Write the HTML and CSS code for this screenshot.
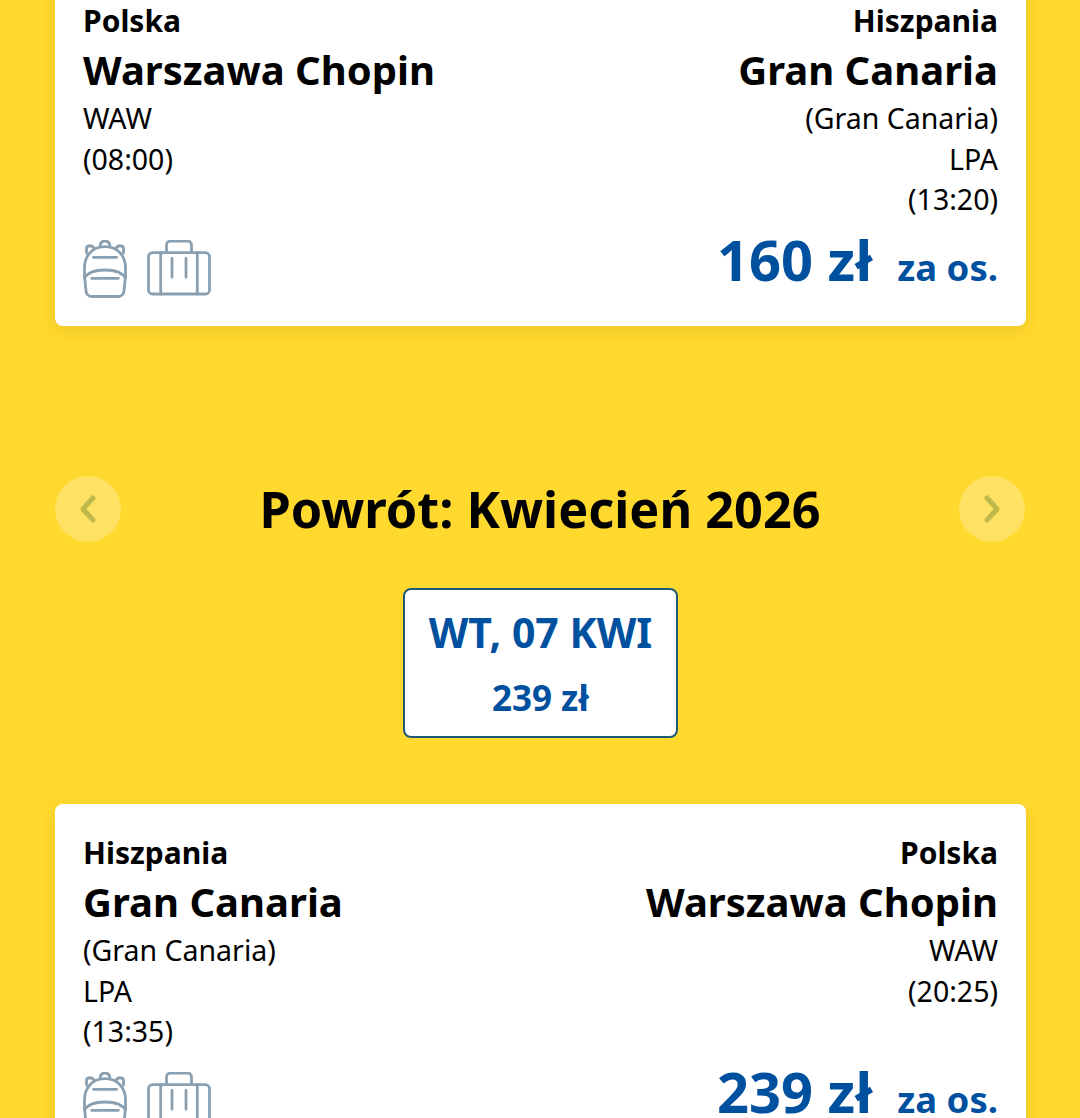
FILE: index.html
```html
<!DOCTYPE html>
<html lang="pl">
<head>
    <meta charset="UTF-8">
    <meta name="viewport" content="width=device-width, initial-scale=1.0">
    <title>Powrót: Kwiecień 2026</title>
    <link rel="stylesheet" href="styles.css">
</head>
<body>
    <svg class="defs" width="0" height="0">
        <symbol id="backpack" viewBox="0 0 44 58">
            <path d="M17 7C17 3 19 1 22 1s5 2 5 6"/>
            <path d="M3.500 13V8.500C3.500 7 4.500 6 6 6h3l2 2"/>
            <path d="M40.500 13V8.500C40.500 7 39.500 6 38 6h-3l-2 2"/>
            <path d="M22 6.700C10 6.700 1.500 15 1.500 28v8L3 51c.3 3 2.500 5.500 5.500 5.500h27c3 0 5.200-2.500 5.500-5.500l1.500-15v-8C42.500 15 34 6.700 22 6.700z"/>
            <path d="M10.500 17.300h23"/>
            <path d="M1.500 38C5 32 12 30 22 30s17 2 20.500 8"/>
            <path d="M8.700 38.300h26.600"/>
        </symbol>
        <symbol id="suitcase" viewBox="0 0 64 58">
            <path d="M19.500 12V5c0-2.500 2-4 4-4h17c2 0 4 1.500 4 4v7"/>
            <rect x="1.500" y="12.700" width="61" height="41.300" rx="4"/>
            <path d="M13.700 12.700V54M50.300 12.700V54M25 18.300v19M39 18.300v19"/>
        </symbol>
    </svg>

    <div class="page">
        <div class="card">
            <div class="route">
                <div class="place">
                    <div class="country">Polska</div>
                    <div class="city">Warszawa Chopin</div>
                    <div class="line">WAW</div>
                    <div class="line">(08:00)</div>
                </div>
                <div class="place end">
                    <div class="country">Hiszpania</div>
                    <div class="city">Gran Canaria</div>
                    <div class="line">(Gran Canaria)</div>
                    <div class="line">LPA</div>
                    <div class="line">(13:20)</div>
                </div>
            </div>
            <div class="cardFoot">
                <div class="bags">
                    <svg class="bag backpack"><use href="#backpack"/></svg>
                    <svg class="bag suitcase"><use href="#suitcase"/></svg>
                </div>
                <div class="price"><span class="amount">160 zł</span><span class="per">za os.</span></div>
            </div>
        </div>

        <div class="monthBar">
            <button class="arrow"><svg viewBox="0 0 20 32"><path d="M15 5L5 16l10 11"/></svg></button>
            <h1>Powrót: Kwiecień 2026</h1>
            <button class="arrow"><svg viewBox="0 0 20 32"><path d="M5 5l10 11L5 27"/></svg></button>
        </div>

        <div class="dateRow">
            <div class="dateBox">
                <div class="dateDay">WT, 07 KWI</div>
                <div class="datePrice">239 zł</div>
            </div>
        </div>

        <div class="card">
            <div class="route">
                <div class="place">
                    <div class="country">Hiszpania</div>
                    <div class="city">Gran Canaria</div>
                    <div class="line">(Gran Canaria)</div>
                    <div class="line">LPA</div>
                    <div class="line">(13:35)</div>
                </div>
                <div class="place end">
                    <div class="country">Polska</div>
                    <div class="city">Warszawa Chopin</div>
                    <div class="line">WAW</div>
                    <div class="line">(20:25)</div>
                </div>
            </div>
            <div class="cardFoot">
                <div class="bags">
                    <svg class="bag backpack"><use href="#backpack"/></svg>
                    <svg class="bag suitcase"><use href="#suitcase"/></svg>
                </div>
                <div class="price"><span class="amount">239 zł</span><span class="per">za os.</span></div>
            </div>
        </div>
    </div>
</body>
</html>
```

FILE: styles.css
```css
*{
    margin: 0;
    padding: 0;
    box-sizing: border-box;
}
html, body{
    height: 1118px;
    overflow: hidden;
}
body{
    background-color: #ffd92e;
    color: #000;
    font-family: "Noto Sans", "Open Sans", sans-serif;
}
.defs{
    display: block;
    height: 0;
}
.page{
    margin-top: -28px;
    padding: 0 54px 0 55px;
}
.card{
    background-color: #fff;
    border-radius: 8px;
    box-shadow: 0 4px 14px rgba(150, 120, 0, 0.18);
    padding: 28px 28px 0;
    height: 354px;
}
.route{
    display: flex;
    justify-content: space-between;
    height: 198px;
}
.end{
    text-align: right;
}
.country{
    font-size: 30px;
    font-weight: 700;
    line-height: 42px;
}
.city{
    font-size: 40px;
    font-weight: 700;
    line-height: 56px;
}
.line{
    font-size: 28.500px;
    line-height: 40.500px;
}
.cardFoot{
    display: flex;
    justify-content: space-between;
    align-items: flex-start;
    margin-top: 29px;
}
.bags{
    display: flex;
    gap: 20px;
    margin-top: 13px;
}
.bag{
    fill: none;
    stroke: #8a9fb0;
    stroke-width: 2.800;
    stroke-linecap: round;
    stroke-linejoin: round;
    height: 58px;
}
.backpack{
    width: 44px;
}
.suitcase{
    width: 64px;
}
.price{
    color: #0050a0;
    font-weight: 700;
    display: flex;
    align-items: baseline;
    gap: 25px;
}
.amount{
    font-size: 56px;
    line-height: 64px;
}
.per{
    font-size: 36.500px;
}
.monthBar{
    display: flex;
    justify-content: space-between;
    align-items: center;
    margin-top: 150px;
    padding-right: 1px;
}
.monthBar h1{
    font-size: 50.400px;
    font-weight: 700;
    line-height: 66px;
}
.arrow{
    width: 66px;
    height: 66px;
    border: 0;
    border-radius: 50%;
    background-color: #ffe263;
    display: flex;
    justify-content: center;
    align-items: center;
}
.arrow svg{
    width: 20px;
    height: 32px;
    fill: none;
    stroke: #bfb84a;
    stroke-width: 5;
    stroke-linecap: round;
    stroke-linejoin: round;
}
.dateRow{
    display: flex;
    justify-content: center;
    margin-top: 46px;
}
.dateBox{
    width: 275px;
    height: 150px;
    background-color: #fff;
    border: 2px solid #1d5a78;
    border-radius: 8px;
    color: #0050a0;
    font-weight: 700;
    text-align: center;
    padding-top: 14px;
}
.dateDay{
    font-size: 41px;
    line-height: 56px;
}
.datePrice{
    font-size: 35px;
    line-height: 46px;
    margin-top: 15px;
}
.dateRow + .card{
    margin-top: 66px;
}
```
